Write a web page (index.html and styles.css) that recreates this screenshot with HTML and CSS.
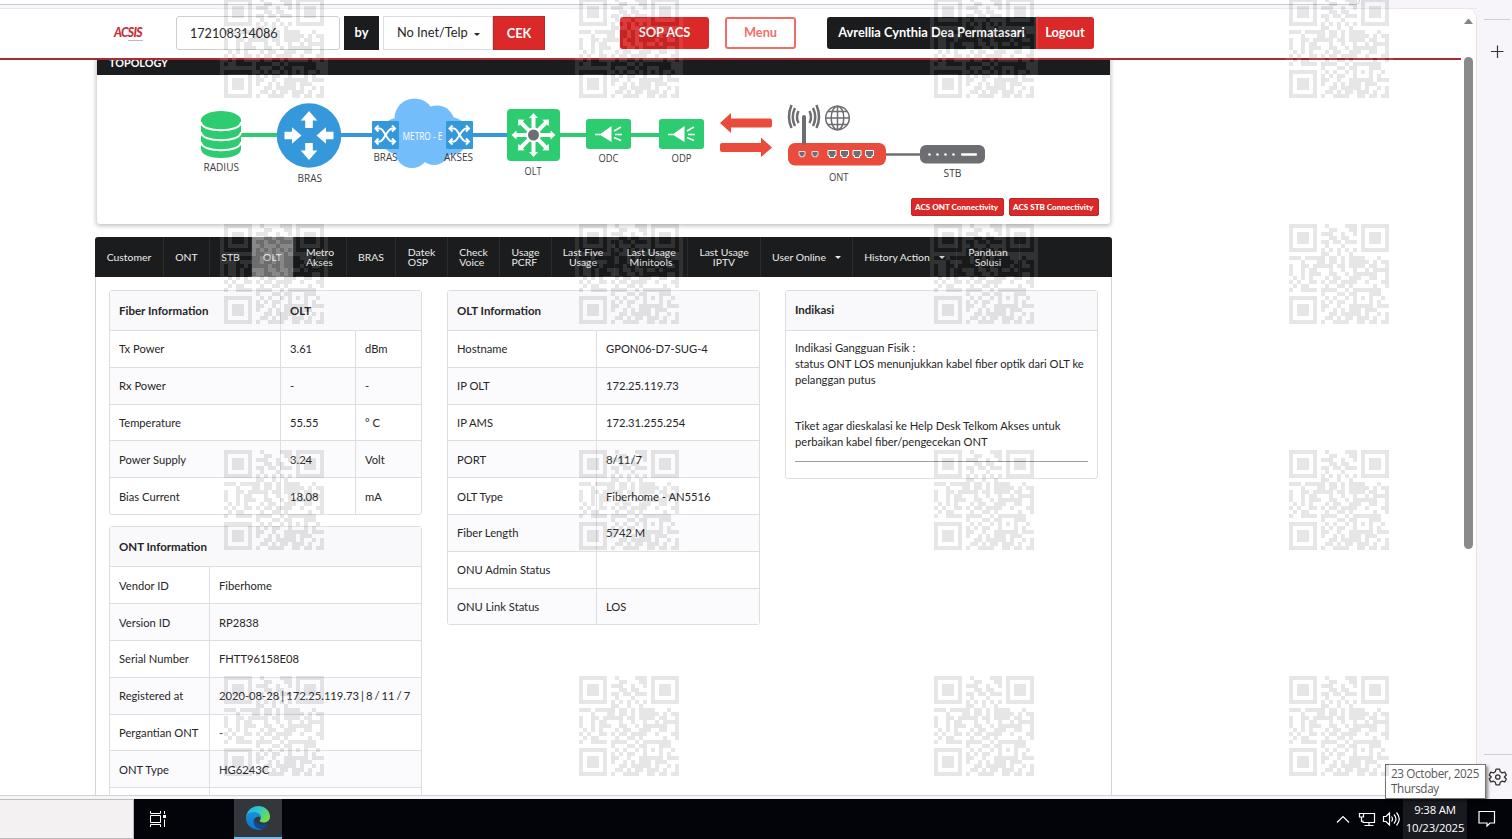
FILE: index.html
```
<!DOCTYPE html>
<html lang="id">
<head>
    <meta charset="UTF-8">
    <meta name="viewport" content="width=device-width, initial-scale=1.0">
    <title>ACSIS</title>
    <link rel="stylesheet" href="styles.css">
</head>
<body>
    <div class="browser">
        <div class="window">
            <div class="chrome"><div class="chrome-bar"></div></div>
            <div class="page">
                <header class="topbar">
                    <div class="logo">ACSIS<span class="logo-line"></span></div>
                    <div class="search-input">172108314086</div>
                    <div class="by-label">by</div>
                    <div class="select">No Inet/Telp <span class="caret"></span></div>
                    <div class="btn-cek">CEK</div>
                    <div class="btn-sop">SOP ACS</div>
                    <div class="btn-menu">Menu</div>
                    <div class="user">
                        <div class="user-name">Avrellia Cynthia Dea Permatasari</div>
                        <div class="logout">Logout</div>
                    </div>
                </header>

                <main class="content">
                    <section class="topology">
                        <h2 class="topology-title">TOPOLOGY</h2>
                        <svg class="diagram" viewBox="97 76 1013 122" width="1013" height="122">
                            <defs>
                                <g id="shuffle" fill="none" stroke="#fff" stroke-width="2">
                                    <path d="M4 7h4c4 0 7 13 12 13h2M4 20h4c4 0 7-13 12-13h2"/>
                                    <path d="M6.500 4L3.500 7l3 3M6.500 17l-3 3 3 3M20 4l3 3-3 3M20 17l3 3-3 3"/>
                                </g>
                                <path id="arrowIn" d="M0 -9l8.300 9.500h-4.500v7.500h-7.600v-7.500h-4.500z" fill="#fff"/>
                                <g id="splitter">
                                    <rect width="45" height="30" rx="3" fill="#2ecc71"/>
                                    <path d="M15 14.500L25.500 7v16L15 16.500z" fill="#fff"/>
                                    <path d="M9 15.500h8M28 12l7-4M29 15.500h7M28 18.500l7 3" stroke="#fff" stroke-width="1.600"/>
                                </g>
                                <path id="spoke" d="M-2 -7v-10h-2.500l4.500-5 4.500 5h-2.500v10z" fill="#fff"/>
                                <path id="port" d="M0 0h8v5H6.500v2h-5V5H0z" fill="#6d6e71" stroke="#fff" stroke-width="1"/>
                            </defs>
                            <path d="M240 135h40M533 135h130" stroke="#2ecc71" stroke-width="4"/>
                            <path d="M340 135h35M470 135h40" stroke="#3498db" stroke-width="4"/>

                            <g fill="#2ecc71">
                                <path d="M201 120v29c0 12 40 12 40 0v-29z"/>
                                <ellipse cx="221" cy="120" rx="20" ry="9"/>
                            </g>
                            <path d="M201 122c0 11 40 11 40 0M201 132c0 11 40 11 40 0M201 142c0 11 40 11 40 0" fill="none" stroke="#fff" stroke-width="2"/>

                            <circle cx="309" cy="135.500" r="32.300" fill="#3498db"/>
                            <use href="#arrowIn" transform="translate(309 120)"/>
                            <use href="#arrowIn" transform="translate(309 151) rotate(180)"/>
                            <use href="#arrowIn" transform="translate(292.500 135.500) rotate(90)"/>
                            <use href="#arrowIn" transform="translate(325.500 135.500) rotate(-90)"/>

                            <g fill="#74bdfb">
                                <circle cx="414.500" cy="118.500" r="20"/>
                                <circle cx="437" cy="123" r="17.500"/>
                                <circle cx="398" cy="136" r="18"/>
                                <circle cx="450" cy="136" r="19"/>
                                <circle cx="412" cy="151" r="17"/>
                                <circle cx="434" cy="149" r="16"/>
                                <path d="M398 125h50v27h-50z"/>
                            </g>
                            <rect x="372" y="121" width="27" height="28" rx="1" fill="#3498db"/>
                            <rect x="446" y="121" width="27" height="28" rx="1" fill="#3498db"/>
                            <use href="#shuffle" x="372" y="121.500"/>
                            <use href="#shuffle" x="446" y="121.500"/>
                            <text x="402.500" y="140" textLength="40" lengthAdjust="spacingAndGlyphs" class="cloud-text">METRO - E</text>

                            <rect x="507" y="109" width="53" height="52" rx="4" fill="#2ecc71"/>
                            <g transform="translate(533.500 135)">
                                <use href="#spoke"/>
                                <use href="#spoke" transform="rotate(45)"/>
                                <use href="#spoke" transform="rotate(90)"/>
                                <use href="#spoke" transform="rotate(135)"/>
                                <use href="#spoke" transform="rotate(180)"/>
                                <use href="#spoke" transform="rotate(225)"/>
                                <use href="#spoke" transform="rotate(270)"/>
                                <use href="#spoke" transform="rotate(315)"/>
                                <circle r="7.500" fill="#fff"/>
                                <circle r="5.500" fill="#6d6e71"/>
                            </g>
                            <use href="#splitter" x="586" y="119"/>
                            <use href="#splitter" x="659" y="119"/>

                            <g fill="#e94b3c">
                                <path d="M720 123l11-10v5.500h39q2 0 2 2v5q0 2-2 2h-39v5.500z"/>
                                <path d="M772 147.500l-11-10v5.500h-39q-2 0-2 2v5q0 2 2 2h39v5z"/>
                                <rect x="788" y="143" width="98" height="22.500" rx="7"/>
                            </g>
                            <g fill="none" stroke="#6d6e71">
                                <path d="M804 143v-26" stroke-width="4" stroke-linecap="round"/>
                                <path d="M798.500 111q-3 6 0 12M809.500 111q3 6 0 12M795 108q-4.500 9 0 18M813 108q4.500 9 0 18M791.500 105q-5 12 0 23M816.500 105q5 12 0 23" stroke-width="2.500"/>
                                <g stroke-width="1.500">
                                    <circle cx="837.500" cy="118" r="11.800"/>
                                    <ellipse cx="837.500" cy="118" rx="6.300" ry="11.800"/>
                                    <path d="M837.500 106v24M825.500 118h24M828 111.500h19M828 124.500h19"/>
                                </g>
                                <path d="M886 154.500h36" stroke-width="2.600"/>
                            </g>
                            <use href="#port" transform="translate(799 151.500) scale(.75)"/>
                            <use href="#port" transform="translate(812 151.500) scale(.75)"/>
                            <use href="#port" x="828" y="150.500"/>
                            <use href="#port" x="840.500" y="150.500"/>
                            <use href="#port" x="853" y="150.500"/>
                            <use href="#port" x="865.500" y="150.500"/>
                            <rect x="920" y="145" width="65" height="18.500" rx="6" fill="#6d6e71"/>
                            <g fill="#fff">
                                <circle cx="929.500" cy="154.500" r="1.300"/>
                                <circle cx="937.500" cy="154.500" r="1.300"/>
                                <circle cx="945.500" cy="154.500" r="1.300"/>
                                <circle cx="953.500" cy="154.500" r="1.300"/>
                                <rect x="961" y="153.200" width="16" height="2.600" rx="1"/>
                            </g>

                            <g class="node-labels">
                                <text x="203.500" y="171" textLength="35.500" lengthAdjust="spacingAndGlyphs">RADIUS</text>
                                <text x="297.500" y="181.500" textLength="24.500" lengthAdjust="spacingAndGlyphs">BRAS</text>
                                <text x="373.500" y="161" textLength="24" lengthAdjust="spacingAndGlyphs">BRAS</text>
                                <text x="444" y="161" textLength="29" lengthAdjust="spacingAndGlyphs">AKSES</text>
                                <text x="524.500" y="174.500" textLength="17" lengthAdjust="spacingAndGlyphs">OLT</text>
                                <text x="598.500" y="162" textLength="20" lengthAdjust="spacingAndGlyphs">ODC</text>
                                <text x="671.500" y="162" textLength="20" lengthAdjust="spacingAndGlyphs">ODP</text>
                                <text x="829" y="180.500" textLength="19.500" lengthAdjust="spacingAndGlyphs">ONT</text>
                                <text x="943.500" y="177" textLength="18" lengthAdjust="spacingAndGlyphs">STB</text>
                            </g>
                        </svg>
                        <div class="topology-actions">
                            <div class="btn-small btn-ont">ACS ONT Connectivity</div>
                            <div class="btn-small">ACS STB Connectivity</div>
                        </div>
                    </section>

                    <nav class="tabs">
                        <div class="tab">Customer</div>
                        <div class="tab">ONT</div>
                        <div class="tab">STB</div>
                        <div class="tab active">OLT</div>
                        <div class="tab">Metro<br>Akses</div>
                        <div class="tab">BRAS</div>
                        <div class="tab">Datek<br>OSP</div>
                        <div class="tab">Check<br>Voice</div>
                        <div class="tab">Usage<br>PCRF</div>
                        <div class="tab center">Last Five<br>Usage</div>
                        <div class="tab center">Last Usage<br>Minitools</div>
                        <div class="tab center">Last Usage<br>IPTV</div>
                        <div class="tab">User Online <span class="caret"></span></div>
                        <div class="tab">History Action <span class="caret"></span></div>
                        <div class="tab center">Panduan<br>Solusi</div>
                    </nav>

                    <div class="tab-body">
                        <div class="column">
                            <table class="card fiber">
                                <colgroup><col class="name"><col class="value"><col></colgroup>
                                <tr><th>Fiber Information</th><th colspan="2">OLT</th></tr>
                                <tr><td>Tx Power</td><td>3.61</td><td>dBm</td></tr>
                                <tr><td>Rx Power</td><td>-</td><td>-</td></tr>
                                <tr><td>Temperature</td><td>55.55</td><td>° C</td></tr>
                                <tr><td>Power Supply</td><td>3.24</td><td>Volt</td></tr>
                                <tr><td>Bias Current</td><td>18.08</td><td>mA</td></tr>
                            </table>
                            <table class="card ont">
                                <colgroup><col class="name"><col></colgroup>
                                <tr><th colspan="2">ONT Information</th></tr>
                                <tr><td>Vendor ID</td><td>Fiberhome</td></tr>
                                <tr><td>Version ID</td><td>RP2838</td></tr>
                                <tr><td>Serial Number</td><td>FHTT96158E08</td></tr>
                                <tr><td>Registered at</td><td class="registered">2020-08-28 | 172.25.119.73 | 8 / 11 / 7</td></tr>
                                <tr><td>Pergantian ONT</td><td>-</td></tr>
                                <tr><td>ONT Type</td><td>HG6243C</td></tr>
                                <tr><td></td><td></td></tr>
                            </table>
                        </div>
                        <div class="column">
                            <table class="card olt">
                                <colgroup><col class="name"><col></colgroup>
                                <tr><th colspan="2">OLT Information</th></tr>
                                <tr><td>Hostname</td><td>GPON06-D7-SUG-4</td></tr>
                                <tr><td>IP OLT</td><td>172.25.119.73</td></tr>
                                <tr><td>IP AMS</td><td>172.31.255.254</td></tr>
                                <tr><td>PORT</td><td>8/11/7</td></tr>
                                <tr><td>OLT Type</td><td>Fiberhome - AN5516</td></tr>
                                <tr><td>Fiber Length</td><td>5742 M</td></tr>
                                <tr><td>ONU Admin Status</td><td></td></tr>
                                <tr><td>ONU Link Status</td><td>LOS</td></tr>
                            </table>
                        </div>
                        <div class="column">
                            <div class="card indikasi">
                                <h3>Indikasi</h3>
                                <div class="indikasi-body">
                                    <p>Indikasi Gangguan Fisik :<br>status ONT LOS menunjukkan kabel fiber optik dari OLT ke<br>pelanggan putus</p>
                                    <p>Tiket agar dieskalasi ke Help Desk Telkom Akses untuk<br>perbaikan kabel fiber/pengecekan ONT</p>
                                    <hr>
                                </div>
                            </div>
                        </div>
                    </div>
                </main>
                <div class="scrollbar">
                    <span class="scroll-up"></span>
                    <span class="scroll-thumb"></span>
                </div>
            </div>
        </div>
        <aside class="sidebar">
            <svg width="35" height="799" viewBox="1477 0 35 799" fill="none" stroke="#333">
                <path d="M1484 19.500h26M1484 754.500h28" stroke="#cfcdd1"/>
                <path d="M1491 51.500h12.500M1497.500 45.500v12.500" stroke-width="1.200"/>
                <g transform="translate(1497.800 777)" stroke-width="1.300" stroke-linejoin="round">
                    <path d="M-1.800 -7.800h3.600l.7 2.600 1.900 1.100 2.600-.8 1.500 2.900-1.900 2 1.900 2-1.500 2.900-2.600-.8-1.900 1.100-.7 2.600h-3.600l-.7-2.600-1.900-1.100-2.600.8-1.500-2.900 1.900-2-1.900-2 1.500-2.900 2.600.8 1.900-1.100z"/>
                    <circle r="2.200"/>
                </g>
            </svg>
        </aside>
    </div>

    <footer class="taskbar">
        <div class="task-search"></div>
        <svg class="task-view" width="16" height="16" viewBox="0 0 16 16" fill="none" stroke="#fff">
            <path d="M.5 0v2.500h10V0M.5 4.500h10v7H.5zM.5 16v-2.500h10V16M14.500 0v3M14.500 8.500V16"/>
            <path d="M13 4h3v3h-3z" fill="#fff" stroke="none"/>
        </svg>
        <div class="task-edge">
            <svg width="24" height="24" viewBox="0 0 24 24">
                <defs>
                    <linearGradient id="edgeTop" x1="0" y1="0" x2="1" y2=".5">
                        <stop offset="0" stop-color="#2aa8e0"/>
                        <stop offset=".5" stop-color="#30c5cf"/>
                        <stop offset="1" stop-color="#6de04e"/>
                    </linearGradient>
                    <linearGradient id="edgeLeft" x1="0" y1="0" x2="0" y2="1">
                        <stop offset="0" stop-color="#1791d8"/>
                        <stop offset="1" stop-color="#1273cf"/>
                    </linearGradient>
                </defs>
                <path d="M0 11C1 4 6 0 12 0c7 0 12 5 12 10.500 0 4-3 6-6.500 6-3 0-4.500-1.200-3.500-2.500 2-3 0-6-4-7C6 6 2 8 0 11z" fill="url(#edgeTop)"/>
                <path d="M0 12c0-4 4-6 8-6 4 .2 7 2.500 7 5.500-3-2-7 0-7 4 0 4 4 7 8 8C8 25.500 0 20 0 12z" fill="url(#edgeLeft)"/>
                <path d="M8.500 12c-3 5 1 11.500 7.500 11 3-.8 5-3 6-5.500-5 2.500-12 1-13.500-5.500z" fill="#114a8b"/>
            </svg>
        </div>
        <svg class="tray" width="66" height="40" viewBox="1335 799 66 40" fill="none" stroke="#fff" stroke-width="1.200">
            <path d="M1337 822.500l6-6 6 6"/>
            <path d="M1364 813.500h10.500v9h-11.500v-2M1369 822.500v3M1364.500 825.500h9M1359.500 813.500h4v3.500h-4zM1361.500 817v5"/>
            <path d="M1383.500 816.500h2.500l3.500-3.500v12l-3.500-3.500h-2.500zM1391.500 816.500q2 2.500 0 5M1394 814.500q4 4.500 0 9M1396.500 812.500q5.500 6.500 0 13"/>
        </svg>
        <div class="clock">9:38 AM<br>10/23/2025</div>
        <svg class="notify" width="18" height="18" viewBox="0 0 18 18" fill="none" stroke="#fff" stroke-width="1.200">
            <path d="M1 1.500h15.500v11.500H12l-3 3v-3H1z"/>
        </svg>
    </footer>

    <div class="date-tip">23 October, 2025<br>Thursday</div>
    <div class="watermark" id="watermark"></div>

    <script>
        const rows = [
            '#######..#....###.#######',
            '#.....#...##...##.#.....#',
            '#.###.#.###..#..#.#.###.#',
            '#.###.#...##.##...#.###.#',
            '#.###.#.##.##.###.#.###.#',
            '#.....#..#...#....#.....#',
            '#######.#.#.#.#.#.#######',
            '........##..#..#.........',
            '###.#####.##.#.####...#..',
            '...#...##.##.#.#####.#.##',
            '#..##.#####.##.####.##..#',
            '#..#.##...#..#..#..#.####',
            '#..#.###..##..#.######..#',
            '.#.#.#...#.##..###..##..#',
            '#.#..##.#.##.####..#...##',
            '.#.##....#..##.#.....#..#',
            '#..####.####..#.#######..',
            '........#...##.##...###..',
            '#######..#.#..#.#.#.#..#.',
            '#.....#.#.#.##..#...#.#..',
            '#.###.#.##..#..######.###',
            '#.###.#.#..#.#.###.###...',
            '#.###.#...##.#####.#..#.#',
            '#.....#..##.#.##.###.#..#',
            '#######.#..####..##.##.##'
        ];

        let path = '';
        rows.forEach((row, y) => {
            [...row].forEach((cell, x) => {
                if (cell === '#') path += `M${x + 1} ${y + 1}h1v1h-1z`;
            });
        });

        const watermark = document.getElementById('watermark');
        for (let i = 0; i < 16; i++) {
            watermark.innerHTML += `<svg viewBox="0 0 27 27" shape-rendering="crispEdges"><path d="${path}"/></svg>`;
        }
    </script>
</body>
</html>
```

FILE: styles.css
```
:root {
    --red: #db2828;
    --dark: #1b1c1d;
    --line: #dedddf;
    --text: #262628;
}

* {
    margin: 0;
    padding: 0;
    box-sizing: border-box;
}

body {
    width: 1512px;
    height: 839px;
    overflow: hidden;
    position: relative;
    font-family: Lato, sans-serif;
    font-size: 11.2px;
    color: var(--text);
    background: #f7f5f9;
}

.browser {
    display: flex;
    height: 799px;
}

.window {
    width: 1477px;
}

.chrome {
    height: 9px;
    border-bottom: 1px solid #e9e7ea;
}

.chrome-bar {
    width: 1360px;
    height: 5px;
    background: #fdfcfe;
    border-bottom: 1px solid #c9c7ca;
    border-right: 1px solid #c9c7ca;
    border-bottom-right-radius: 8px;
}

.page {
    position: relative;
    height: 787px;
    overflow: hidden;
    background: #fff;
    border-bottom: 1px solid #d3d1d4;
    border-right: 1px solid #e6e3e6;
    border-top-right-radius: 9px;
}

.topbar {
    position: relative;
    z-index: 1;
    display: flex;
    align-items: flex-start;
    width: 1461px;
    height: 51px;
    padding: 7px 0 0 114px;
    background: #fff;
    border-bottom: 2px solid #a82c32;
    font-size: 12.8px;
    line-height: 32px;
}

.logo {
    width: 62px;
    padding-top: 1px;
    color: #c92f37;
    font-size: 12.2px;
    font-weight: 900;
    font-style: italic;
    letter-spacing: -0.7px;
}

.logo-line {
    display: block;
    width: 15px;
    height: 1px;
    margin: -9px 0 0 14px;
    background: #c9b5b7;
}

.search-input {
    width: 164px;
    height: 34px;
    padding-left: 13px;
    border: 1px solid #ceced0;
    border-radius: 3px;
    font-size: 12.6px;
    line-height: 33px;
}

.by-label {
    width: 35px;
    height: 34px;
    margin: 0 4px;
    background: var(--dark);
    color: #fff;
    font-weight: bold;
    text-align: center;
}

.select {
    width: 110px;
    height: 34px;
    padding-left: 13px;
    border: 1px solid #dcdcde;
    line-height: 31px;
}

.caret {
    display: inline-block;
    margin-left: 3px;
    border: 3.5px solid transparent;
    border-top: 3.5px solid currentColor;
    border-bottom: 0;
    vertical-align: 1px;
}

.btn-cek {
    width: 52px;
    height: 34px;
    background: var(--red);
    border: 1px solid #b92b2d;
    color: #fff;
    font-weight: bold;
    text-align: center;
}

.btn-sop {
    width: 89px;
    height: 32px;
    margin: 1px 16px 0 75px;
    border-radius: 3px;
    background: var(--red);
    color: #fff;
    font-weight: bold;
    line-height: 30px;
    text-align: center;
}

.btn-menu {
    width: 71px;
    height: 32px;
    margin: 1px 31px 0 0;
    border: 2px solid #f36d68;
    border-radius: 3px;
    color: #f0706b;
    font-weight: bold;
    line-height: 27px;
    text-align: center;
}

.user {
    display: flex;
    height: 32px;
    margin-top: 1px;
    border-radius: 3px;
    overflow: hidden;
    color: #fff;
    font-weight: bold;
    line-height: 30px;
    text-align: center;
    white-space: nowrap;
}

.user-name {
    width: 209px;
    background: var(--dark);
}

.logout {
    width: 58px;
    background: var(--red);
}

.content {
    width: 1017px;
    margin: -13px 0 0 95px;
}

.topology {
    width: 1013px;
    height: 177px;
    margin-left: 2px;
    background: #fff;
    border-radius: 3px;
    box-shadow: 0 1px 4px 1px rgba(34, 36, 38, .28);
}

.topology-title {
    height: 28px;
    padding-left: 12px;
    background: var(--dark);
    color: #fff;
    font-size: 10.8px;
    line-height: 31px;
}

.diagram {
    display: block;
    margin-top: 1px;
}

.node-labels text {
    font-family: "Open Sans", sans-serif;
    font-size: 11px;
    fill: #3c3c3e;
}

.cloud-text {
    font-family: "Open Sans", sans-serif;
    font-size: 10.5px;
    fill: #fff;
}

.topology-actions {
    display: flex;
    justify-content: flex-end;
    gap: 5px;
    padding-right: 11px;
}

.btn-small {
    width: 90px;
    height: 18px;
    padding-left: 3px;
    border: 1px solid #b72a2c;
    border-radius: 2px;
    background: var(--red);
    color: #fff;
    font-size: 8.1px;
    font-weight: 900;
    line-height: 16px;
    white-space: nowrap;
}

.btn-ont {
    width: 93px;
}

.tabs {
    display: grid;
    grid-template-columns: 69px 46px 42px 42px 53px 49px 52px 52px 52px 63px 73px 73px 92px 104px 63px;
    height: 40px;
    margin-top: 13px;
    background: var(--dark);
    border-radius: 3px 3px 0 0;
    color: #ececec;
    font-size: 10.4px;
    line-height: 10px;
}

.tab {
    display: flex;
    align-items: center;
    justify-content: center;
    border-right: 1px solid #2b2c2d;
    white-space: nowrap;
}

.tab.center {
    text-align: center;
}

.tab.active {
    background: #7b7b7c;
}

.tab .caret {
    margin-left: 9px;
}

.tab-body {
    display: grid;
    grid-template-columns: repeat(3, 313px);
    gap: 25px;
    height: 540px;
    padding: 13px;
    border: 1px solid #d4d4d5;
    border-top: 0;
}

.card {
    width: 313px;
    border: 1px solid var(--line);
    border-radius: 3px;
    border-spacing: 0;
    table-layout: fixed;
}

.ont {
    margin-top: 11.5px;
}

.card th,
.indikasi h3 {
    height: 39px;
    padding-left: 9px;
    background: #f9f9fb;
    font-size: 11.5px;
    font-weight: bold;
    text-align: left;
}

.card td {
    height: 36.8px;
    padding-left: 9px;
    border-top: 1px solid var(--line);
    white-space: nowrap;
}

.card tr:nth-child(odd) td {
    background: #fbfafc;
}

.card td + td,
.card th + th {
    border-left: 1px solid var(--line);
}

.fiber .name {
    width: 170px;
}

.fiber .value {
    width: 75px;
}

.ont .name {
    width: 99px;
}

.olt .name {
    width: 148px;
}

.registered {
    word-spacing: -0.8px;
}

.indikasi {
    height: 189px;
}

.indikasi h3 {
    height: 40px;
    line-height: 38px;
    border-bottom: 1px solid var(--line);
}

.indikasi-body {
    padding: 9px;
    line-height: 16px;
}

.indikasi-body p {
    margin-bottom: 30px;
}

.indikasi-body p + p {
    margin-bottom: 11px;
}

.indikasi hr {
    border: 0;
    border-top: 1px solid #9b9b9c;
}

.scrollbar {
    position: absolute;
    top: 0;
    right: 3px;
    width: 9px;
}

.scroll-up {
    display: block;
    margin: 10px 0 33px;
    border: 4.5px solid transparent;
    border-top: 0;
    border-bottom: 5px solid #858585;
}

.scroll-thumb {
    display: block;
    height: 492px;
    border-radius: 5px;
    background: #8a8a8a;
}

.sidebar {
    width: 35px;
}

.taskbar {
    display: flex;
    align-items: center;
    height: 40px;
    background: #020409;
}

.task-search {
    width: 134px;
    height: 40px;
    background: #f3f1f2;
    border: 1px solid #bdbbbc;
    border-left: 0;
}

.task-view {
    margin: 0 68px 0 16px;
}

.task-edge {
    display: flex;
    justify-content: center;
    align-items: center;
    width: 48px;
    height: 40px;
    background: #33363a;
    border-bottom: 2px solid #76b9ed;
}

.tray {
    margin-left: 1053px;
}

.clock {
    width: 64px;
    height: 40px;
    margin-left: 2px;
    padding-top: 2px;
    background: #181a1f;
    color: #fff;
    font-family: "Open Sans", sans-serif;
    font-size: 11.4px;
    letter-spacing: -0.2px;
    line-height: 18px;
    text-align: center;
}

.notify {
    margin-left: 11px;
}

.date-tip {
    position: absolute;
    left: 1385px;
    top: 764px;
    width: 101px;
    height: 35px;
    padding: 1px 0 0 5px;
    border: 1px solid #767676;
    background: #fff;
    box-shadow: 2px 2px 3px rgba(0, 0, 0, .45);
    color: #575757;
    font-family: "Open Sans", sans-serif;
    font-size: 11.7px;
    letter-spacing: -0.35px;
    line-height: 15px;
    white-space: nowrap;
}

/* repeated code overlay, 355 x 226 pitch */
.watermark {
    position: absolute;
    z-index: 2;
    left: 220px;
    top: -6px;
    display: grid;
    grid-template-columns: repeat(4, 108px);
    grid-auto-rows: 108px;
    gap: 118px 247px;
    opacity: .095;
    pointer-events: none;
}

.watermark svg {
    width: 108px;
    height: 108px;
    background: #fff;
}
```
